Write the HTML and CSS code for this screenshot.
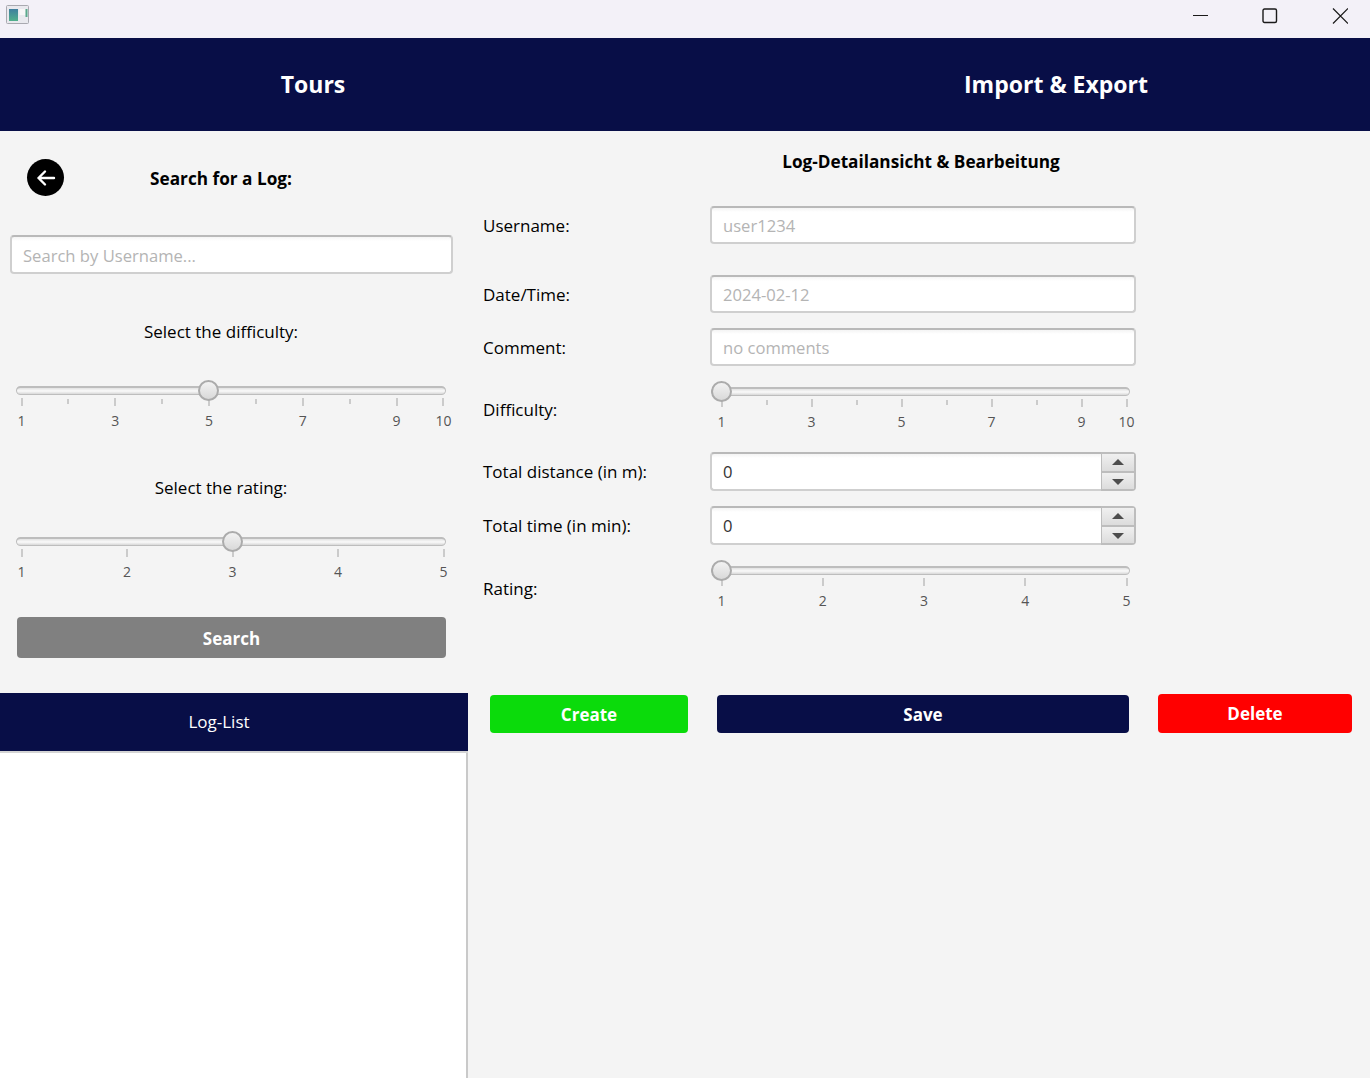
FILE: index.html

```html
<!DOCTYPE html>
<html lang="de">
<head>
  <meta charset="UTF-8" />
  <meta name="viewport" content="width=device-width, initial-scale=1.0"/>
  <title>Tour Planner - Logs</title>
  <link rel="stylesheet" href="styles.css">
</head>
<body>
  <div class="titlebar">
    <svg class="app-icon" width="24" height="20" viewBox="0 0 24 20">
      <defs>
        <linearGradient id="appGrad" x1="0" y1="0" x2="0" y2="1">
          <stop offset="0" stop-color="#3f7f9f"/>
          <stop offset="1" stop-color="#52b08c"/>
        </linearGradient>
      </defs>
      <rect x="0.5" y="0.5" width="22" height="18" rx="1" fill="#e9e9ee" stroke="#a9a9b0"/>
      <rect x="3" y="4" width="9" height="12" fill="url(#appGrad)"/>
      <rect x="13.5" y="4" width="6" height="6" fill="#f7f7f7"/>
      <rect x="19.5" y="4" width="2" height="8" fill="#5aa98c"/>
    </svg>
    <div class="window-controls">
      <svg width="16" height="16" viewBox="0 0 16 16"><path d="M1 7.500H16" stroke="#1a1a1a" fill="none"/></svg>
      <svg width="16" height="16" viewBox="0 0 16 16"><rect x="1" y="1" width="13.500" height="13.500" rx="1.500" stroke="#1a1a1a" stroke-width="1.400" fill="none"/></svg>
      <svg width="16" height="16" viewBox="0 0 16 16"><path d="M1 0.500L16 15.500M16 0.500L1 15.500" stroke="#1a1a1a" stroke-width="1.200" fill="none"/></svg>
    </div>
  </div>

  <div class="nav">
    <div class="nav-tab">Tours</div>
    <div class="nav-tab nav-tab-import">Import &amp; Export</div>
  </div>

  <div class="content">
    <div class="left-col">
      <div class="search-panel">
        <div class="search-head">
          <div class="back-btn">
            <svg width="20" height="18" viewBox="0 0 20 18"><path d="M18 9H2.500M9 2.500L2.500 9 9 15.500" stroke="#fff" stroke-width="2.400" stroke-linecap="round" stroke-linejoin="round" fill="none"/></svg>
          </div>
          <div class="search-title">Search for a Log:</div>
        </div>

        <input class="text-field search-input" type="text" placeholder="Search by Username..." />

        <div class="filter-label filter-label-difficulty">Select the difficulty:</div>
        <div class="slider slider-left slider-gap-difficulty">
          <div class="track"></div>
          <div class="thumb" style="left: 182px"></div>
          <div class="scale">
            <div class="tick"><i></i><span>1</span></div>
            <div class="tick minor"><i></i></div>
            <div class="tick"><i></i><span>3</span></div>
            <div class="tick minor"><i></i></div>
            <div class="tick"><i></i><span>5</span></div>
            <div class="tick minor"><i></i></div>
            <div class="tick"><i></i><span>7</span></div>
            <div class="tick minor"><i></i></div>
            <div class="tick"><i></i><span>9</span></div>
            <div class="tick"><i></i><span>10</span></div>
          </div>
        </div>

        <div class="filter-label filter-label-rating">Select the rating:</div>
        <div class="slider slider-left slider-gap-rating">
          <div class="track"></div>
          <div class="thumb" style="left: 206px"></div>
          <div class="scale">
            <div class="tick"><i></i><span>1</span></div>
            <div class="tick"><i></i><span>2</span></div>
            <div class="tick"><i></i><span>3</span></div>
            <div class="tick"><i></i><span>4</span></div>
            <div class="tick"><i></i><span>5</span></div>
          </div>
        </div>

        <button class="btn btn-search">Search</button>
      </div>

      <div class="list-head">Log-List</div>
      <div class="list-body"></div>
    </div>

    <div class="right-col">
      <h2 class="detail-title">Log-Detailansicht &amp; Bearbeitung</h2>

      <div class="form-row row-username">
        <label>Username:</label>
        <input class="text-field" type="text" placeholder="user1234" />
      </div>
      <div class="form-row row-date">
        <label>Date/Time:</label>
        <input class="text-field" type="text" placeholder="2024-02-12" />
      </div>
      <div class="form-row row-comment">
        <label>Comment:</label>
        <input class="text-field" type="text" placeholder="no comments" />
      </div>

      <div class="form-row row-slider row-difficulty">
        <label>Difficulty:</label>
        <div class="slider slider-right">
          <div class="track"></div>
          <div class="thumb" style="left: 0px"></div>
          <div class="scale">
            <div class="tick"><i></i><span>1</span></div>
            <div class="tick minor"><i></i></div>
            <div class="tick"><i></i><span>3</span></div>
            <div class="tick minor"><i></i></div>
            <div class="tick"><i></i><span>5</span></div>
            <div class="tick minor"><i></i></div>
            <div class="tick"><i></i><span>7</span></div>
            <div class="tick minor"><i></i></div>
            <div class="tick"><i></i><span>9</span></div>
            <div class="tick"><i></i><span>10</span></div>
          </div>
        </div>
      </div>

      <div class="form-row row-distance">
        <label>Total distance (in m):</label>
        <div class="spinner">
          <input class="text-field spinner-input" type="text" value="0" />
          <div class="spinner-btns">
            <div class="spin-btn"><b class="arrow-up"></b></div>
            <div class="spin-btn"><b class="arrow-down"></b></div>
          </div>
        </div>
      </div>
      <div class="form-row row-time">
        <label>Total time (in min):</label>
        <div class="spinner">
          <input class="text-field spinner-input" type="text" value="0" />
          <div class="spinner-btns">
            <div class="spin-btn"><b class="arrow-up"></b></div>
            <div class="spin-btn"><b class="arrow-down"></b></div>
          </div>
        </div>
      </div>

      <div class="form-row row-slider row-rating">
        <label>Rating:</label>
        <div class="slider slider-right">
          <div class="track"></div>
          <div class="thumb" style="left: 0px"></div>
          <div class="scale">
            <div class="tick"><i></i><span>1</span></div>
            <div class="tick"><i></i><span>2</span></div>
            <div class="tick"><i></i><span>3</span></div>
            <div class="tick"><i></i><span>4</span></div>
            <div class="tick"><i></i><span>5</span></div>
          </div>
        </div>
      </div>

      <div class="actions">
        <button class="btn btn-create">Create</button>
        <button class="btn btn-save">Save</button>
        <button class="btn btn-delete">Delete</button>
      </div>
    </div>
  </div>
</body>
</html>
```

FILE: styles.css

```css
* {
  box-sizing: border-box;
}
body {
  margin: 0;
  height: 1078px;
  overflow: hidden;
  display: flex;
  flex-direction: column;
  font-family: 'Open Sans', sans-serif;
  font-size: 17px;
  line-height: 22px;
  color: #000;
  background-color: #f4f4f4;
}

/* window chrome */
.titlebar {
  height: 38px;
  display: flex;
  justify-content: space-between;
  align-items: flex-start;
  background-color: #f3f1f8;
  padding: 5px 0 0 6px;
}
.window-controls {
  display: flex;
  gap: 54px;
  padding: 3px 22px 0 0;
}

/* top nav */
.nav {
  height: 93px;
  display: grid;
  grid-template-columns: 626px 1fr;
  background-color: #080e47;
  color: #fff;
}
.nav-tab {
  display: flex;
  justify-content: center;
  align-items: center;
  font-size: 23px;
  font-weight: 700;
  padding-bottom: 1px;
}
.nav-tab-import {
  padding-left: 116px;
}

.content {
  flex: 1;
  display: grid;
  grid-template-columns: 468px 1fr;
  min-height: 0;
}

/* left column */
.left-col {
  display: flex;
  flex-direction: column;
  min-height: 0;
}
.search-panel {
  height: 562px;
  padding: 28px 0 0 10px;
}
.search-head {
  display: grid;
  grid-template-columns: 17px 37px 314px;
  align-items: center;
}
.back-btn {
  grid-column: 2;
  width: 37px;
  height: 37px;
  border-radius: 50%;
  background-color: #000;
  display: flex;
  justify-content: center;
  align-items: center;
}
.search-title {
  text-align: center;
  font-weight: 700;
  font-size: 17.2px;
  padding-top: 2px;
}
.text-field {
  display: block;
  width: 426px;
  height: 38px;
  padding: 0 11px;
  border: 2px solid #cfcfcf;
  border-top-color: #b9b9b9;
  border-radius: 4px;
  background: linear-gradient(#f4f4f4, #fff 4px);
  font-family: inherit;
  font-size: 16.6px;
  color: #333;
}
.text-field::placeholder {
  color: #b4b4b4;
  opacity: 1;
}
.search-input {
  width: 443px;
  height: 39px;
  margin-top: 39px;
  padding-top: 2px;
}
.filter-label {
  width: 422px;
  text-align: center;
}
.filter-label-difficulty {
  margin-top: 47px;
}
.filter-label-rating {
  margin-top: 47px;
}

/* sliders */
.slider {
  position: relative;
}
.slider-left {
  width: 430px;
  margin-left: 6px;
}
.slider-gap-difficulty {
  margin-top: 43px;
}
.slider-gap-rating {
  margin-top: 38px;
}
.slider-right {
  width: 419px;
  margin-left: 1px;
}
.track {
  height: 9px;
  border: 1px solid #bdbdbd;
  border-width: 2px 1px 1px;
  border-radius: 5px;
  background: linear-gradient(#e2e2e2, #fafafa 50%, #d8d8d8);
}
.thumb {
  position: absolute;
  top: -6px;
  width: 21px;
  height: 21px;
  border-radius: 50%;
  border: 2px solid #ababab;
  background: linear-gradient(#f2f2f2, #d9d9d9);
}
.scale {
  display: flex;
  justify-content: space-between;
  margin-top: 3px;
}
.slider-left .scale {
  padding: 0 2px 0 5px;
}
.slider-right .scale {
  padding: 0 3px 0 10px;
}
.tick {
  width: 1px;
  display: flex;
  flex-direction: column;
  align-items: center;
}
.tick i {
  display: block;
  flex: none;
  width: 2px;
  height: 8px;
  background-color: #cbcbcb;
}
.tick.minor i {
  height: 5px;
  margin-top: 1px;
}
.tick span {
  font-size: 14px;
  line-height: 18px;
  margin-top: 6px;
  color: #555;
  white-space: nowrap;
}

.btn {
  border: none;
  border-radius: 4px;
  color: #fff;
  font-family: inherit;
  font-weight: 700;
  font-size: 17px;
  padding: 0;
}
.btn-search {
  display: block;
  width: 429px;
  height: 41px;
  margin: 36px 0 0 7px;
  padding-top: 2px;
  background-color: #808080;
}

.list-head {
  height: 60px;
  display: flex;
  justify-content: center;
  align-items: center;
  padding: 0 30px 0 0;
  background-color: #080e47;
  border-bottom: 2px solid #d4d4d4;
  color: #fff;
}
.list-body {
  flex: 1;
  background-color: #fff;
  border-right: 2px solid #c9c9c9;
}

/* right column */
.right-col {
  display: flex;
  flex-direction: column;
  padding-left: 15px;
}
.detail-title {
  width: 876px;
  margin: 20px 0 0;
  text-align: center;
  font-size: 17.2px;
  line-height: 22px;
  font-weight: 700;
}
.form-row {
  display: flex;
  align-items: center;
}
.form-row label {
  flex: none;
  width: 227px;
  padding-top: 1px;
}
.row-username {
  margin-top: 33px;
}
.row-date {
  margin-top: 31px;
}
.row-comment {
  margin-top: 15px;
}
.row-slider {
  align-items: flex-start;
}
.row-slider label {
  padding-top: 12px;
}
.row-difficulty {
  margin-top: 21px;
}
.row-distance {
  margin-top: 21px;
}
.row-time {
  margin-top: 15px;
}
.row-rating {
  margin-top: 21px;
}

.spinner {
  display: flex;
  width: 426px;
  height: 39px;
}
.spinner-input {
  flex: 1;
  width: auto;
  height: 39px;
  border-right: none;
  border-radius: 4px 0 0 4px;
}
.spinner-btns {
  width: 35px;
  display: flex;
  flex-direction: column;
  border: 1px solid #bdbdbd;
  border-width: 2px 2px 2px 1px;
  border-radius: 0 4px 4px 0;
}
.spin-btn {
  flex: 1;
  display: flex;
  justify-content: center;
  align-items: center;
  background: linear-gradient(#f0f0f0, #dcdcdc);
}
.spin-btn + .spin-btn {
  border-top: 2px solid #bdbdbd;
}
.arrow-up,
.arrow-down {
  width: 0;
  height: 0;
  border-left: 6px solid transparent;
  border-right: 6px solid transparent;
}
.arrow-up {
  border-bottom: 6px solid #4d4d4d;
}
.arrow-down {
  margin-top: 2px;
  border-top: 6px solid #4d4d4d;
}

.actions {
  display: flex;
  align-items: flex-end;
  margin: 84px 0 0 7px;
}
.actions .btn {
  height: 38px;
}
.btn-create {
  width: 198px;
  background-color: #0bdb0b;
}
.btn-save {
  width: 412px;
  margin-left: 29px;
  background-color: #080e47;
}
.actions .btn-delete {
  width: 194px;
  height: 39px;
  margin-left: 29px;
  background-color: #ff0000;
}
```
